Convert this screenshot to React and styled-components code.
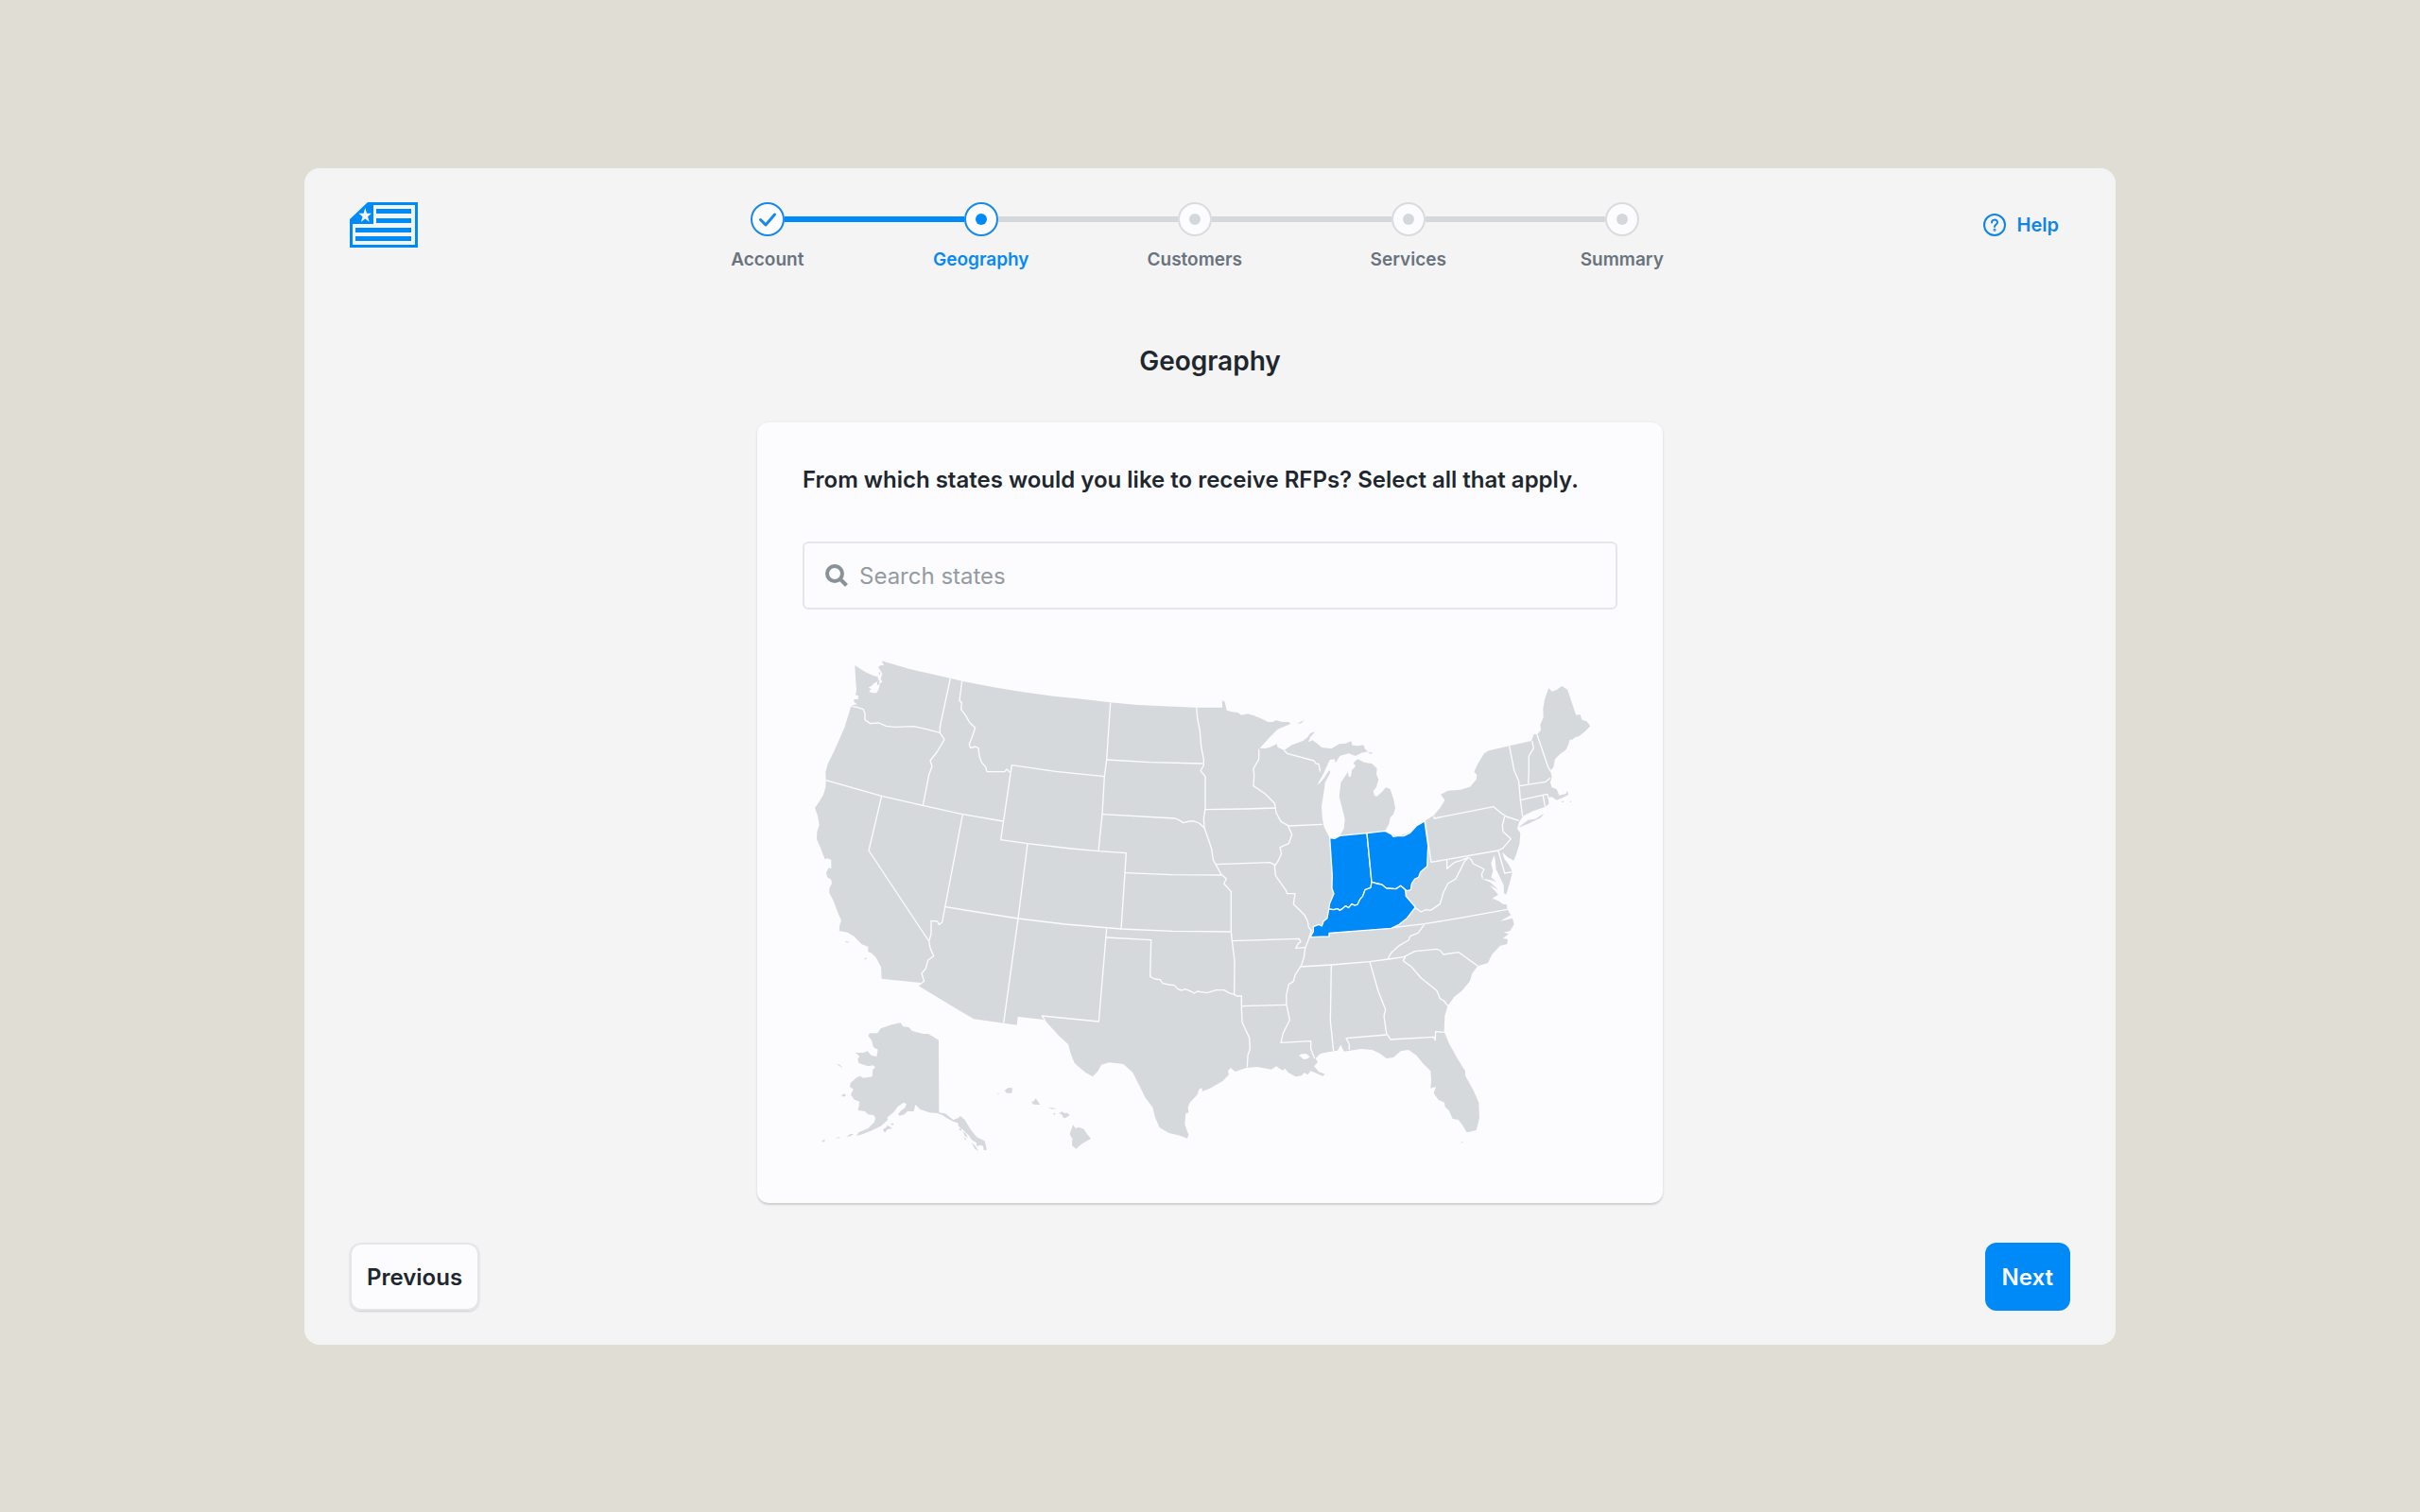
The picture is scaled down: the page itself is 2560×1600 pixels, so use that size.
import React from 'react'
import styled, { createGlobalStyle } from 'styled-components'

const GlobalStyle = createGlobalStyle`
  * {
    box-sizing: border-box;
  }
  body {
    margin: 0;
    background: #e0ddd5;
    color: #1f272e;
    font-family: Inter, 'Liberation Sans', sans-serif;
  }
  button, input {
    font-family: inherit;
  }
`
const Page = styled.div`
  display: flex;
  min-height: 100vh;
  padding: 178px 322px 177px;
`
const Panel = styled.div`
  flex: 1;
  display: flex;
  flex-direction: column;
  padding: 36px 48px;
  border-radius: 16px;
  background: #f4f4f4;
`
const Header = styled.header`
  display: flex;
  justify-content: space-between;
  align-items: flex-start;
`
const Logo = styled.svg`
  width: 72px;
  height: 48px;
`
const Steps = styled.ol`
  display: flex;
  margin: 0;
  padding: 0;
  list-style: none;
`
const Step = styled.li`
  width: 226px;
  display: flex;
  flex-direction: column;
  align-items: center;
  gap: 13px;
`
const Track = styled.div`
  align-self: stretch;
  display: flex;
  align-items: center;
`
const Line = styled.span`
  flex: 1;
  height: 6px;
  background: ${(p) => (p.$hidden ? 'transparent' : p.$done ? '#008af8' : '#d5d8db')};
`
const Marker = styled.span`
  width: 36px;
  height: 36px;
  display: flex;
  align-items: center;
  justify-content: center;
  border: 2px solid ${(p) => (p.$active ? '#1689ea' : '#d9dbde')};
  border-radius: 50%;
  background: #fcfcff;
`
const Dot = styled.span`
  width: 12px;
  height: 12px;
  border-radius: 50%;
  background: ${(p) => (p.$active ? '#008af8' : '#d5d8db')};
`
const StepLabel = styled.span`
  font-size: 19px;
  line-height: 24px;
  font-weight: 600;
  color: ${(p) => (p.$current ? '#0689f5' : '#69737d')};
`
const Help = styled.button`
  height: 48px;
  display: flex;
  align-items: center;
  gap: 12px;
  padding: 0 12px;
  border: 0;
  background: none;
  color: #0f84e6;
  font-size: 20px;
  font-weight: 600;
`
const Main = styled.main`
  display: flex;
  flex-direction: column;
  align-items: center;
  margin-top: 77px;
`
const Title = styled.h1`
  margin: 0 0 47px;
  font-size: 28px;
  line-height: 36px;
  font-weight: 600;
`
const Card = styled.section`
  width: 100%;
  max-width: 958px;
  display: flex;
  flex-direction: column;
  gap: 48px;
  padding: 44px 48px 48px;
  border-radius: 12px;
  background: #fcfcff;
  box-shadow: 0 2px 2px rgba(31, 39, 46, 0.16), 0 0 4px rgba(31, 39, 46, 0.04);
`
const Question = styled.label`
  font-size: 24px;
  line-height: 34px;
  font-weight: 600;
`
const SearchBox = styled.div`
  height: 72px;
  display: flex;
  align-items: center;
  gap: 12px;
  padding: 0 22px;
  border: 2px solid #e5e6ea;
  border-radius: 6px;
  color: #8a9299;
`
const SearchInput = styled.input`
  flex: 1;
  padding: 0;
  border: 0;
  outline: 0;
  background: none;
  color: #1f272e;
  font-size: 24px;
  &::placeholder {
    color: #949ba2;
    opacity: 1;
  }
`
const Icon = styled.svg`
  width: 24px;
  height: 24px;
  flex: none;
`
const Map = styled.svg`
  display: block;
  width: 100%;
  fill: #d6d9dc;
  stroke-linejoin: round;
`
const Footer = styled.footer`
  display: flex;
  justify-content: space-between;
  margin-top: auto;
`
const Button = styled.button`
  height: 72px;
  padding: 0 18px;
  border: 0;
  border-radius: 12px;
  background: ${(p) => (p.$primary ? '#008af8' : '#fcfcff')};
  color: ${(p) => (p.$primary ? '#fcfcff' : '#1f272e')};
  font-size: 24px;
  font-weight: 600;
  box-shadow: ${(p) =>
    p.$primary ? 'none' : 'inset 0 0 0 2px #e4e5e7, 0 1px 2px rgba(31, 39, 46, 0.2)'};
`

const steps = ['Account', 'Geography', 'Customers', 'Services', 'Summary']
const current = 1

const mainland = `M163 72L175 80 200 95 222 105 235 108 238 118 232 125 225 128 215 138 206 143 215 147 208 157
222 160 232 160 240 145 242 130 250 125 245 115 250 100 245 90 237 78 245 72 255 72 248 58 340 85 466 113 503 122
600 141 690 156 800 171 870 178 974 190 1060 198 1247 206 1329 206 1329 183 1337 188 1343 215 1360 220 1378 222
1390 230 1410 226 1430 232 1450 240 1475 252 1488 252 1500 247 1520 252 1540 252 1546 258 1505 275 1480 300 1448 335
1465 336 1480 332 1502 322 1505 332 1525 342 1550 325 1585 312 1600 300 1608 288 1624 283 1608 300 1602 316 1615 310
1630 320 1645 333 1675 337 1700 322 1720 320 1738 313 1742 326 1760 328 1777 325 1782 338 1792 346 1770 350 1752 360
1730 352 1702 360 1688 382 1685 370 1670 372 1662 390 1648 420 1630 452 1640 445 1652 430 1668 405 1672 412 1655 445
1652 470 1644 520 1647 560 1652 585 1662 605 1670 620 1685 622 1702 613 1715 590 1718 560 1708 520 1700 490 1705 445
1715 430 1728 410 1730 425 1737 425 1740 405 1752 392 1745 382 1758 370 1780 380 1805 385 1820 400 1818 418 1825 435
1818 458 1808 472 1812 486 1820 488 1835 475 1848 460 1862 465 1872 495 1878 525 1872 545 1862 555 1858 575 1846 598
1865 608 1885 614 1905 608 1925 604 1945 582 1971 567 2000 548 2020 525 2035 500 2022 482 2045 470 2085 467 2115 458
2135 435 2137 420 2128 410 2140 385 2160 352 2175 343 2240 328 2310 312 2318 290 2328 292 2340 278 2338 260 2348 238
2347 210 2352 180 2365 144 2375 155 2390 150 2407 138 2425 150 2448 220 2452 230 2465 228 2470 245 2485 250 2497 265
2480 282 2460 298 2450 300 2440 308 2432 308 2428 322 2420 340 2400 355 2385 370 2380 395 2370 407 2375 425 2370 445
2375 460 2390 465 2398 485 2420 480 2423 470 2428 482 2410 492 2390 500 2375 490 2365 492 2365 512 2352 522 2315 535
2285 550 2272 568 2265 590 2275 605 2272 640 2262 672 2254 692 2235 682 2218 665 2223 685 2238 705 2250 728 2242 760
2230 800 2223 795 2222 770 2210 745 2198 720 2195 690 2192 675 2182 700 2188 725 2182 745 2200 760 2175 752 2152 750
2178 760 2190 770 2205 785 2178 770 2205 800 2185 812 2205 820 2220 830 2232 832 2233 847 2245 865 2210 885 2250 875
2255 895 2242 915 2223 920 2238 925 2220 938 2235 942 2233 957 2210 963 2185 990 2172 1017 2140 1027 2122 1050
2115 1075 2090 1105 2065 1125 2045 1152 2035 1185 2033 1235 2050 1275 2075 1320 2100 1360 2100 1375 2125 1420
2143 1460 2145 1510 2135 1548 2120 1552 2105 1555 2090 1530 2078 1515 2060 1512 2048 1485 2036 1474 2034 1460
2015 1452 2000 1430 2007 1410 1990 1415 1992 1390 1990 1360 1965 1335 1945 1310 1920 1293 1895 1297 1872 1317
1850 1320 1830 1305 1805 1293 1770 1290 1735 1295 1715 1298 1705 1277 1695 1295 1665 1300 1640 1305 1625 1320
1632 1332 1620 1345 1635 1362 1655 1370 1648 1376 1610 1360 1600 1372 1590 1365 1580 1375 1562 1378 1538 1365
1528 1352 1520 1358 1500 1345 1485 1355 1440 1347 1405 1350 1370 1362 1355 1350 1347 1360 1350 1372 1330 1392
1290 1415 1265 1425 1265 1414 1255 1418 1250 1435 1225 1462 1220 1475 1222 1492 1213 1495 1210 1530 1222 1562
1218 1574 1195 1565 1160 1557 1130 1540 1115 1505 1108 1475 1085 1445 1065 1405 1045 1365 1015 1338 970 1333 945 1340
935 1360 918 1378 895 1365 860 1335 848 1305 840 1275 810 1248 767 1200 757 1196 680 1188 677 1214 635 1208 540 1195
365 1090 372 1080 248 1067 246 1030 230 1000 215 985 205 982 205 965 185 958 160 932 140 920 113 915 115 895 120 882
112 865 95 820 82 795 82 780 90 765 88 752 75 745 72 730 80 715 88 718 88 690 75 685 68 688 55 655 42 625 43 600
50 580 45 550 36 525 50 505 62 485 70 460 71 437 70 410 77 385 97 345 130 270 150 205 158 198 170 196 160 188
160 180 172 180 175 170 165 165 168 150 165 110z`

const islands = [
  'M2270 585L2300 563 2322 560 2350 542 2340 556 2300 575 2275 585z',
  'M1565 258L1590 245 1580 256z',
  'M1790 349L1807 349 1800 354z',
  'M2403 506L2412 502 2412 507z',
  'M2432 507L2436 500 2436 507z',
  'M2083 1588L2094 1584 2092 1588z',
  'M192 1003L200 1000 198 1007z',
  'M130 948L146 950 138 953z',
  'M234 122L242 118 240 132 234 136z',
  'M238 92L244 96 242 104z',
]

const alaska = `M308 97L315 108 335 112 345 123 380 132 395 132 410 140 429 152 430 382 450 385 475 405 490 400 498 393
512 405 530 435 550 460 575 472 582 500 572 502 570 488 560 485 550 490 548 476 535 470 525 455 510 440 492 425
490 415 478 412 455 400 440 390 425 384 400 382 370 372 355 357 350 378 330 378 320 388 305 392 300 387 310 375
322 367 327 355 318 350 300 362 285 382 265 398 268 405 245 425 210 442 180 453 168 455 175 445 205 432 225 412
228 398 222 390 205 388 195 378 173 375 178 348 160 340 150 325 158 308 147 300 149 288 170 270 180 266 190 272
218 268 220 245 228 238 220 232 205 235 175 225 172 212 178 203 165 192 190 192 203 187 215 200 232 205 236 182
222 175 216 152 205 138 210 130 235 130 245 115 280 103z`

const farIslands = [
  'M252 435L262 430 266 422 282 432 266 436 258 446z',
  'M275 420L284 415 286 422z',
  'M135 460L148 450 160 451 150 456z',
  'M100 464L112 460 118 463z',
  'M57 473L65 468 70 470 62 476z',
  'M120 326L132 322 134 329 126 332z',
  'M103 227L115 230 125 240 120 238z',
  'M492 434L502 430 500 440z',
  'M505 440L514 448 522 462 512 456z',
  'M508 458L518 468 512 468z',
  'M532 476L545 488 556 505 544 497z',
  'M638 312L650 303 663 304 661 320 645 320z',
  'M723 348L731 346 737 337 751 357 730 356z',
  'M775 366L790 367 804 370 790 371z',
  'M811 383L820 379 828 384 838 383 845 391 830 400 822 396 822 390z',
  'M792 384L800 385 796 391z',
  'M855 421L864 432 874 428 890 435 900 450 912 465 885 480 865 497 852 487 853 465 845 450z',
  'M616 322L620 318 618 326z',
]

const borders = [
  '155 203 170 205 190 212 195 225 195 245 212 257 240 255 262 265 290 268 350 266 390 275 433 286',
  '466 113 433 268 433 286 447 308 425 345 402 375 408 392 398 420 379 517',
  '503 122 495 185 502 190 500 212 515 232 528 255 545 270 535 300 526 322 530 335 545 330 555 335 558 360 565 380 578 395 582 410 610 410 638 410 645 402 655 412',
  '71 437 248 487 379 517 505 545 633 567',
  '955 425 800 409 661 389 626 626 711 638 850 654 936 662 1024 668 1020 730 1008 909',
  '974 190 962 372 955 425 948 545 936 662',
  '962 372 1100 380 1268 384',
  '948 545 1180 558 1195 565 1205 572 1225 567 1240 567 1255 573 1272 588',
  '1247 206 1250 240 1258 280 1262 330 1270 370 1270 390 1260 407 1275 425 1275 527 1270 560 1272 588 1285 625 1295 655 1300 690 1308 704 1325 735 1342 750 1334 765 1357 790 1357 917 1360 947 1368 1010 1367 1118',
  '1272 530 1400 528 1498 525',
  '1308 704 1480 698 1497 707',
  '1020 731 1170 737 1325 738',
  '450 839 681 876 830 894 1008 909 1170 916 1357 918',
  '505 545 440 888 430 895 425 885 405 883 405 925 398 948',
  '248 487 207 660 398 948 402 970 413 995 395 1008 388 1035 375 1050 383 1075 365 1088',
  '711 638 681 876 635 1208',
  '962 908 937 1203 757 1185 767 1200',
  '960 936 1103 944 1100 1060 1115 1068 1132 1070 1140 1082 1160 1086 1177 1088 1188 1100 1200 1104 1210 1100 1225 1105 1240 1113 1250 1107 1280 1112 1310 1103 1335 1103 1350 1112 1367 1117 1375 1122 1390 1122 1390 1155 1392 1205 1415 1255 1417 1290 1410 1310 1408 1348',
  '1360 947 1573 940 1578 950 1570 955 1562 970 1592 968',
  '1390 1154 1532 1150',
  '1445 338 1445 370 1428 400 1430 420 1428 455 1465 480 1495 510 1500 540 1515 568 1537 580 1550 610 1540 638 1512 650 1517 670 1505 695 1495 710 1498 740 1530 785 1535 797 1560 797 1555 830 1590 865 1600 885 1603 903 1612 915 1605 935 1600 950 1592 970 1588 1000 1580 1025 1560 1055 1555 1075 1540 1085 1532 1120 1533 1150 1543 1198 1522 1240 1515 1270 1610 1265 1610 1290 1622 1320',
  '1537 582 1648 577',
  '1525 342 1535 352 1620 375 1626 384 1635 385 1640 410',
  '1575 1029 1675 1023 1797 1013 1855 1005 1910 997',
  '1675 1022 1672 1200 1682 1298',
  '1797 1013 1825 1110 1847 1165 1842 1185 1850 1240 1863 1260 2000 1252 2005 1262 2006 1235 2033 1237',
  '1850 1245 1722 1256 1732 1275 1732 1293',
  '1910 997 1903 1010 1930 1030 1960 1065 2010 1105 2020 1130 2032 1137 2045 1154',
  '1905 998 1940 980 2010 973 2022 978 2030 990 2080 983 2140 1027',
  '1855 1003 1865 985 1890 962 1920 945 1925 932 1950 922 1970 895',
  '1605 935 1668 932 1668 922 1870 905 1970 893 2080 875 2233 847',
  '1942 842 1960 855 1975 848 1990 850 2020 830 2030 795 2045 765 2070 750 2090 710 2097 695 2110 682 2085 692 2065 698 2042 718 2042 690',
  '2110 682 2120 690 2125 702 2150 714 2160 720 2152 735 2155 748',
  '1972 567 1992 697 2205 660 2220 652 2245 623 2220 600 2218 580 2225 552',
  '2000 550 2002 558 2190 521 2210 538 2230 552 2270 565',
  '2205 660 2225 732 2250 728',
  '2240 328 2255 405 2270 440 2275 500 2282 552',
  '2312 312 2317 335 2302 360 2302 410 2300 448',
  '2272 455 2355 442 2370 430',
  '2275 500 2360 481 2367 500',
  '2347 485 2353 520',
  '2328 292 2363 395 2372 410',
]

const selected = [
  {
    name: 'Indiana',
    d: 'M1670 620L1685 622 1702 613 1788 605 1803 760 1800 778 1782 785 1775 805 1766 815 1758 832 1748 834 1740 830 1730 842 1720 836 1710 845 1702 850 1695 845 1682 848 1667 846 1670 828 1683 797 1677 780 1678 740z',
  },
  {
    name: 'Ohio',
    d: 'M1788 605L1846 598 1865 608 1872 616 1885 614 1905 614 1925 604 1945 582 1971 567 1982 645 1979 710 1958 728 1952 745 1940 750 1930 765 1927 785 1915 788 1895 772 1880 782 1850 780 1835 768 1820 765 1803 760z',
  },
  {
    name: 'Kentucky',
    d: 'M1803 760L1820 765 1835 768 1850 780 1880 782 1895 772 1910 785 1912 805 1942 840 1915 875 1890 895 1865 907 1668 922 1668 933 1608 935 1618 918 1618 902 1635 895 1645 900 1650 885 1662 875 1667 846 1682 848 1695 845 1702 850 1710 845 1720 836 1730 842 1740 830 1748 834 1758 832 1766 815 1775 805 1782 785 1800 778z',
  },
]

function StatesMap() {
  return (
    <Map viewBox="-3 39 2586 1596" role="img" aria-label="Map of the United States">
      <path d={mainland} />
      {islands.map((d) => (
        <path key={d} d={d} />
      ))}
      <g transform="translate(0 1110)">
        <path d={alaska} />
        {farIslands.map((d) => (
          <path key={d} d={d} />
        ))}
      </g>
      <path d="M1572 1310L1582 1306 1595 1305 1607 1315 1597 1322 1586 1322z" fill="#fcfcff" />
      <g fill="none" stroke="#fcfcff" strokeWidth="4">
        {borders.map((points) => (
          <polyline key={points} points={points} />
        ))}
      </g>
      <g fill="#008af8" stroke="#fcfcff" strokeWidth="4">
        {selected.map((state) => (
          <path key={state.name} d={state.d}>
            <title>{state.name}</title>
          </path>
        ))}
      </g>
    </Map>
  )
}

function App() {
  return (
    <>
      <GlobalStyle />
      <Page>
        <Panel>
          <Header>
            <Logo viewBox="0 0 72 48" role="img" aria-label="Logo">
              <path
                fill="#008af8"
                fillRule="evenodd"
                d="M19 0H72V48H0V18zM25 3V23H3V45H69V3zM16.300 6L14.600 11.800H9.500L13.500 15.300 12 20.800 16.300 17.600 20.600 20.800 19.100 15.300 23 11.800H18z"
              />
              <path fill="#008af8" d="M28 7H65V12H28zM28 17H65V22H28zM6 27H65V32H6zM6 36H65V41H6z" />
            </Logo>
            <Steps>
              {steps.map((label, i) => (
                <Step key={label} aria-current={i === current ? 'step' : undefined}>
                  <Track>
                    <Line $hidden={i === 0} $done={i <= current} />
                    <Marker $active={i <= current}>
                      {i < current ? (
                        <Icon viewBox="0 0 24 24" fill="none" stroke="#1689ea" strokeWidth="3" strokeLinecap="round" strokeLinejoin="round">
                          <path d="M4.500 12.500L10 18 19.500 7" />
                        </Icon>
                      ) : (
                        <Dot $active={i === current} />
                      )}
                    </Marker>
                    <Line $hidden={i === steps.length - 1} $done={i < current} />
                  </Track>
                  <StepLabel $current={i === current}>{label}</StepLabel>
                </Step>
              ))}
            </Steps>
            <Help type="button">
              <Icon viewBox="0 0 24 24" fill="none" stroke="currentColor" strokeWidth="2" strokeLinecap="round">
                <circle cx="12" cy="12" r="11" />
                <path d="M9 9.500C9 5.700 15 5.700 15 9.300C15 11.500 12 11.500 12 14" />
                <circle cx="12" cy="17.300" r="0.500" />
              </Icon>
              Help
            </Help>
          </Header>
          <Main>
            <Title>Geography</Title>
            <Card>
              <Question htmlFor="states">
                From which states would you like to receive RFPs? Select all that apply.
              </Question>
              <SearchBox>
                <Icon viewBox="0 0 24 24" fill="none" stroke="currentColor" strokeWidth="4">
                  <circle cx="10" cy="10" r="8" />
                  <path d="M15.500 15.500L22.500 22.500" />
                </Icon>
                <SearchInput id="states" type="text" placeholder="Search states" />
              </SearchBox>
              <StatesMap />
            </Card>
          </Main>
          <Footer>
            <Button type="button">Previous</Button>
            <Button type="button" $primary>
              Next
            </Button>
          </Footer>
        </Panel>
      </Page>
    </>
  )
}

export default App
